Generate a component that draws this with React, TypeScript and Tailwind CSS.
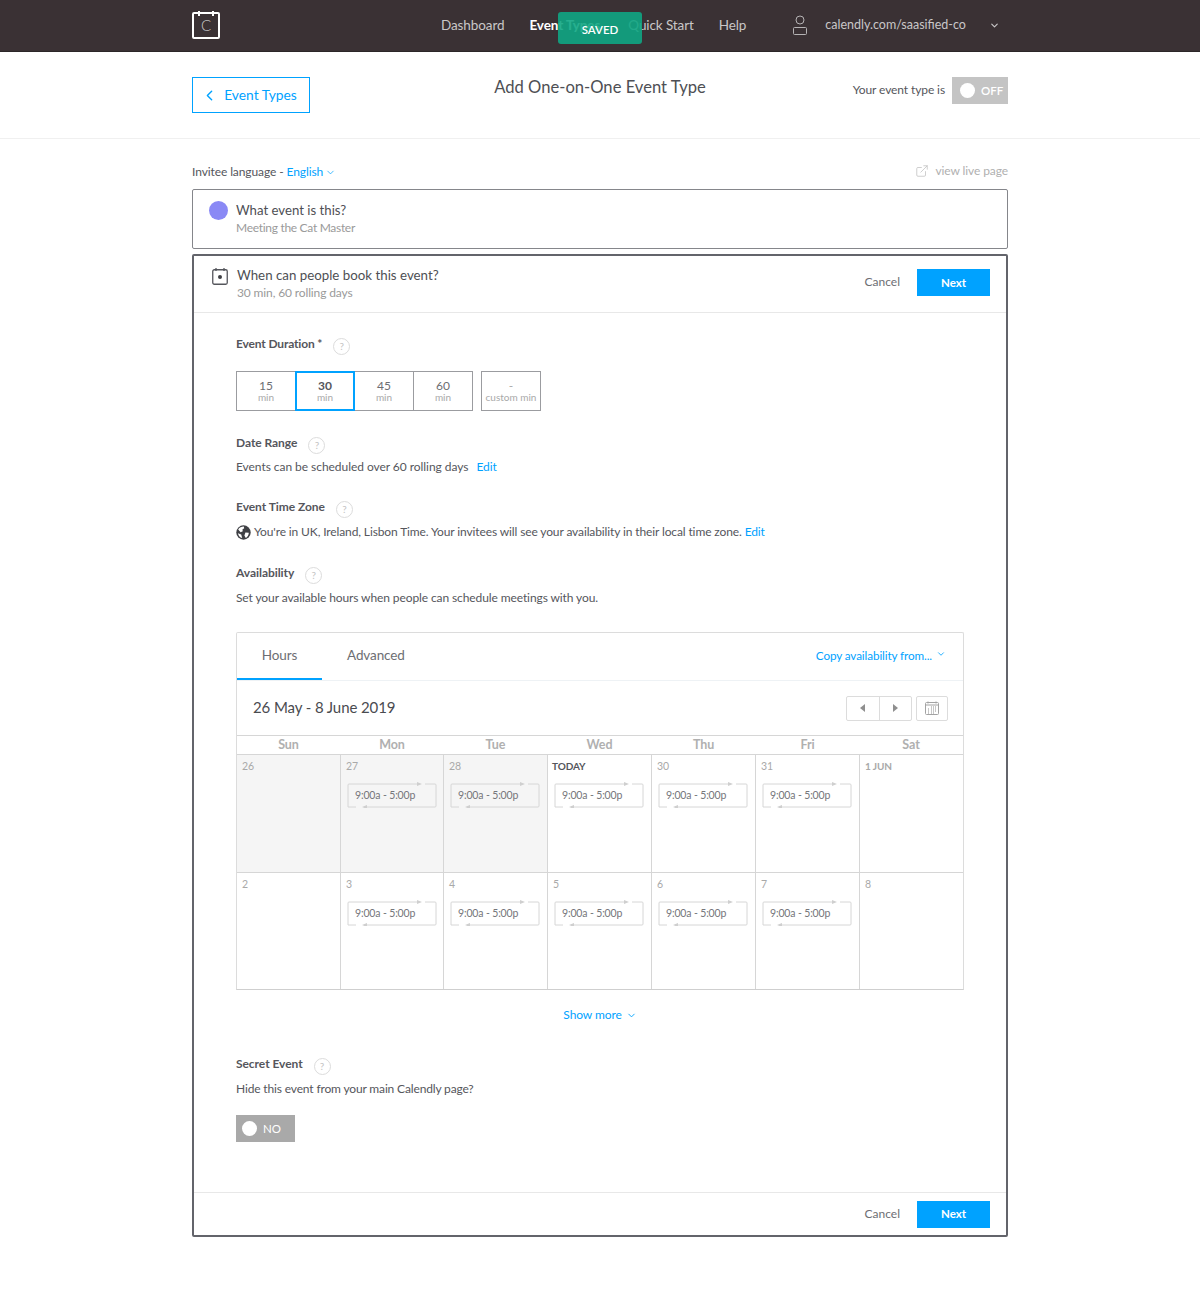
import { ChevronDown, ChevronLeft, ExternalLink } from 'lucide-react';

const days = ['Sun', 'Mon', 'Tue', 'Wed', 'Thu', 'Fri', 'Sat'];

const weeks = [
  [
    { label: '26', past: true, slot: false },
    { label: '27', past: true, slot: true },
    { label: '28', past: true, slot: true },
    { label: 'TODAY', today: true, slot: true },
    { label: '30', slot: true },
    { label: '31', slot: true },
    { label: '1 JUN', month: true, slot: false },
  ],
  [
    { label: '2', slot: false },
    { label: '3', slot: true },
    { label: '4', slot: true },
    { label: '5', slot: true },
    { label: '6', slot: true },
    { label: '7', slot: true },
    { label: '8', slot: false },
  ],
];

function HelpDot() {
  return (
    <span className="ml-[11px] mt-[4px] flex h-[17px] w-[17px] items-center justify-center rounded-full border border-[#dcdcdc] text-[10px] font-normal text-[#c4c4c4]">
      ?
    </span>
  );
}

function SectionLabel({ children }: { children: React.ReactNode }) {
  return (
    <div className="flex h-[18px] items-center text-[12px] font-bold tracking-[-0.05px] text-[#55565c]">
      {children}
      <HelpDot />
    </div>
  );
}

function Duration({ value, active, first }: { value: string; active?: boolean; first?: boolean }) {
  if (active) {
    return (
      <div className="relative z-10 -ml-px flex h-10 w-[60px] flex-col items-center justify-center border-2 border-[#00a2ff] leading-none">
        <span className="text-[12px] font-bold text-[#55565c]">{value}</span>
        <span className="text-[10px] text-[#a9a9a9]">min</span>
      </div>
    );
  }
  return (
    <div
      className={`flex h-10 flex-col items-center justify-center border-y border-r border-[#9b9ca0] leading-none ${
        first ? 'w-[60px] border-l' : 'w-[59px]'
      }`}
    >
      <span className="text-[12px] text-[#6d6e73]">{value}</span>
      <span className="text-[10px] text-[#a9a9a9]">min</span>
    </div>
  );
}

function TimeSlot() {
  return (
    <div className="relative mx-[6px] mt-[9px] h-[26px] w-[90px] pl-[8px] pt-[6px] text-[10.5px] leading-[15px] tracking-[-0.15px] text-[#75767a]">
      <svg className="absolute left-0 top-0" width="90" height="26" viewBox="0 0 90 26" fill="none">
        <path d="M 1 25 L 1 3 Q 1 2 2 2 L 70 2 M 78 2 L 88 2 Q 89 2 89 3 L 89 24 Q 89 25 88 25 L 17 25 M 9 25 L 1 25" stroke="#d6d6d6" />
        <path d="M 70 0 L 75 2 L 70 4 Z" fill="#cfcfcf" />
        <path d="M 20 23 L 15 25 L 20 27 Z" fill="#cfcfcf" />
      </svg>
      <span className="relative">9:00a - 5:00p</span>
    </div>
  );
}

function PrimaryActions() {
  return (
    <div className="flex items-center">
      <span className="mb-px text-[12px] text-[#6d6e73]">Cancel</span>
      <span className="ml-[17px] flex h-[27px] w-[73px] items-center justify-center bg-[#00a2ff] text-[11.5px] font-bold text-white">
        Next
      </span>
    </div>
  );
}

function Calendar() {
  return (
    <div className="mt-[26px] rounded-t-[2px] border border-[#dcdcdc] border-b-[#cfcfcf] text-[#55565c]">
      <div className="flex h-[48px] items-stretch justify-between border-b border-[#eef2f5]">
        <div className="flex">
          <div className="flex w-[85px] items-center justify-center border-b-2 border-[#00a2ff] text-[13.5px] text-[#6d6e73]">Hours</div>
          <div className="ml-[25px] flex items-center pb-[2px] text-[13.5px] text-[#6d6e73]">Advanced</div>
        </div>
        <div className="mr-[17px] flex items-center pb-[2px] text-[11.7px] text-[#00a2ff]">
          Copy availability from...
          <ChevronDown className="mb-[3px] ml-[4px] h-[10px] w-[10px]" strokeWidth={2} />
        </div>
      </div>

      <div className="flex h-[55px] items-center justify-between border-b border-[#d6d6d6] pl-[16px] pr-[15px]">
        <span className="mb-[2px] text-[15px] text-[#4a4b50]">26 May - 8 June 2019</span>
        <div className="flex items-center">
          <div className="flex h-[25px] w-[66px] rounded-[2px] border border-[#dcdcdc]">
            <div className="flex flex-1 items-center justify-center border-r border-[#dcdcdc]">
              <svg width="6" height="8" viewBox="0 0 6 8"><path d="M 5 0 L 0 4 L 5 8 Z" fill="#8f8f8f" /></svg>
            </div>
            <div className="flex flex-1 items-center justify-center">
              <svg width="6" height="8" viewBox="0 0 6 8"><path d="M 1 0 L 6 4 L 1 8 Z" fill="#8f8f8f" /></svg>
            </div>
          </div>
          <div className="ml-[4px] flex h-[25px] w-[32px] items-center justify-center rounded-[2px] border border-[#dcdcdc]">
            <svg width="14" height="14" viewBox="0 0 14 14" fill="none">
              <rect x="0.5" y="1.5" width="13" height="12" rx="1" stroke="#a3a3a3" />
              <path d="M 1 4 L 13 4" stroke="#a3a3a3" />
              <path d="M 3 0.5 V 2.5 M 11 0.5 V 2.5" stroke="#a3a3a3" />
              <path d="M 6 6 H 7 M 8 6 H 9 M 10 6 H 11 M 3 8 H 4 M 6 8 H 7 M 8 8 H 9 M 10 8 H 11 M 3 10 H 4 M 6 10 H 7 M 8 10 H 9 M 10 10 H 11 M 3 12 H 4 M 6 12 H 7 M 8 12 H 9" stroke="#8f8f8f" />
            </svg>
          </div>
        </div>
      </div>

      <div className="grid h-[19px] grid-cols-[104px_103px_104px_104px_104px_104px_103px] border-b border-[#d6d6d6]">
        {days.map((d) => (
          <div key={d} className="flex items-center justify-center pr-px text-[12.5px] font-bold text-[#b0b0b0]">
            {d}
          </div>
        ))}
      </div>

      {weeks.map((week, i) => (
        <div
          key={i}
          className={
            i === 0
              ? 'grid h-[118px] grid-cols-[104px_103px_104px_104px_104px_104px_103px] border-b border-[#d6d6d6]'
              : 'grid h-[116px] grid-cols-[104px_103px_104px_104px_104px_104px_103px]'
          }
        >
          {week.map((cell) => (
            <div
              key={cell.label}
              className={`border-r border-[#d6d6d6] last:border-r-0 ${cell.past ? 'bg-[#f5f5f5]' : 'bg-white'}`}
            >
              <div
                className={
                  cell.today
                    ? 'pl-[4px] pt-[5px] text-[10px] font-bold leading-[13px] text-[#55565c]'
                    : cell.month
                      ? 'pl-[5px] pt-[5px] text-[10px] font-bold leading-[13px] text-[#a9a9a9]'
                      : 'pl-[5px] pt-[5px] text-[10.5px] leading-[13px] text-[#a9a9a9]'
                }
              >
                {cell.label}
              </div>
              {cell.slot && <TimeSlot />}
            </div>
          ))}
        </div>
      ))}
    </div>
  );
}

export default function App() {
  return (
    <div className="relative min-h-[1295px] bg-white font-['Lato',sans-serif] text-[#55565c]">
      {/* top nav */}
      <header className="flex h-[52px] items-center border-b border-[#2c2628] bg-[#3a3134] pl-[192px]">
        <div className="relative flex h-[27px] w-[28px] items-center justify-center rounded-[2px] border-2 border-white">
          <span className="absolute -top-[3px] left-[4px] h-[5px] w-[2px] bg-white" />
          <span className="absolute -top-[3px] right-[4px] h-[5px] w-[2px] bg-white" />
          <span className="text-[15px] font-light leading-none text-[#c8c8c8]">C</span>
        </div>
        <nav className="mb-px ml-[221px] flex items-center text-[13.5px] tracking-[-0.1px] text-[#c9c7c8]">
          <span>Dashboard</span>
          <span className="ml-[25px] font-bold text-white">Event Types</span>
          <span className="ml-[28px]">Quick Start</span>
          <span className="ml-[25px]">Help</span>
        </nav>
        <svg className="ml-[46px]" width="16" height="21" viewBox="0 0 16 21" fill="none">
          <circle cx="8" cy="5" r="4" stroke="#b5b3b4" />
          <rect x="1.5" y="12.5" width="13" height="7" rx="1" stroke="#b5b3b4" />
        </svg>
        <span className="ml-[17px] text-[12.5px] text-[#c9c7c8]">calendly.com/saasified-co</span>
        <ChevronDown className="ml-[23px] h-[11px] w-[11px] text-[#c9c7c8]" strokeWidth={2.5} />
      </header>

      {/* saved toast */}
      <div className="absolute left-[558px] top-[12px] flex h-[32px] w-[84px] items-center justify-center rounded-[3px] bg-[#10a683]/90 pt-[3px] text-[11.5px] font-semibold text-white">
        SAVED
      </div>

      {/* page title row */}
      <div className="flex h-[87px] items-start border-b border-[#f0f0f0] px-[192px] pt-[25px]">
        <div className="flex-1">
          <div className="flex h-[36px] w-[118px] items-center justify-center border border-[#00a2ff] pr-[2px] text-[13.8px] text-[#00a2ff]">
            <ChevronLeft className="-ml-[2px] mr-[6px] h-[17px] w-[17px]" strokeWidth={2} />
            Event Types
          </div>
        </div>
        <h1 className="-mt-px text-[16.6px] leading-[22px] text-[#4e4f54]">Add One-on-One Event Type</h1>
        <div className="flex flex-1 items-center justify-end">
          <span className="mb-[2px] text-[12px] tracking-[-0.1px] text-[#55565c]">Your event type is</span>
          <div className="ml-[7px] flex h-[27px] w-[56px] items-center bg-[#c4c4c4] pl-[8px] text-[11.5px] font-semibold text-white">
            <span className="h-[15px] w-[15px] rounded-full bg-white" />
            <span className="ml-[6px]">OFF</span>
          </div>
        </div>
      </div>

      <main className="mx-auto w-[816px]">
        <div className="flex h-[50px] items-end justify-between pb-[8px] text-[12px] tracking-[-0.1px]">
          <span className="flex items-center">
            Invitee language -
            <span className="ml-[3px] text-[#00a2ff]">English</span>
            <ChevronDown className="ml-[2px] h-[11px] w-[11px] text-[#00a2ff]" strokeWidth={1.6} />
          </span>
          <span className="mb-px flex items-center text-[#b0b0b0]">
            <ExternalLink className="mr-[6px] h-[14px] w-[14px] text-[#c0c0c0]" strokeWidth={1.3} />
            view live page
          </span>
        </div>

        <section className="flex h-[60px] rounded-[2px] border border-[#85868b] pl-[16px] pt-[11px]">
          <span className="h-[19px] w-[19px] rounded-full bg-[#8a89f5]" />
          <div className="ml-[8px]">
            <div className="text-[13.2px] leading-[18px] text-[#4e4f54]">What event is this?</div>
            <div className="mt-[1px] text-[12px] leading-[16px] tracking-[-0.3px] text-[#9a9a9a]">Meeting the Cat Master</div>
          </div>
        </section>

        <section className="mt-[5px] rounded-[2px] border-2 border-[#63646b]">
          <div className="flex h-[57px] items-center justify-between border-b border-[#e8e8e8] pb-[3px] pl-[18px] pr-[16px]">
            <div className="flex h-full pt-[10px]">
              <svg className="mt-[2px]" width="16" height="17" viewBox="0 0 16 17" fill="none">
                <rect x="0.75" y="1.75" width="14.5" height="14.5" rx="1.5" stroke="#55565c" strokeWidth="1.3" />
                <path d="M 4 0 V 3 M 12 0 V 3" stroke="#55565c" strokeWidth="1.3" />
                <circle cx="8" cy="9" r="2" fill="#3e3f44" />
              </svg>
              <div className="ml-[9px]">
                <div className="text-[13.3px] leading-[18px] text-[#4e4f54]">When can people book this event?</div>
                <div className="mt-[1px] text-[12px] leading-[16px] tracking-[-0.13px] text-[#9a9a9a]">30 min, 60 rolling days</div>
              </div>
            </div>
            <PrimaryActions />
          </div>

          <div className="h-[880px] border-b border-[#e8e8e8] px-[42px] pt-[22px] text-[12px] tracking-[-0.1px]">
            <SectionLabel>
              <span className="tracking-[-0.15px]">Event Duration *</span>
            </SectionLabel>

            <div className="mt-[18px] flex tracking-normal">
              <Duration value="15" first />
              <Duration value="30" active />
              <Duration value="45" />
              <Duration value="60" />
              <div className="ml-[8px] flex h-10 w-[60px] flex-col items-center justify-center border border-[#9b9ca0] leading-none">
                <span className="text-[12px] text-[#a9a9a9]">-</span>
                <span className="text-[10px] text-[#a9a9a9]">custom min</span>
              </div>
            </div>

            <div className="mt-[23px]">
              <SectionLabel>Date Range</SectionLabel>
            </div>
            <p className="mt-[7px] leading-[16px] tracking-[-0.05px]">
              Events can be scheduled over 60 rolling days
              <span className="ml-[8px] text-[#00a2ff]">Edit</span>
            </p>

            <div className="mt-[23px]">
              <SectionLabel>Event Time Zone</SectionLabel>
            </div>
            <p className="mt-[8px] flex items-center leading-[16px] tracking-[-0.12px]">
              <svg className="mr-[3px]" width="15" height="15" viewBox="0 0 15 15">
                <circle cx="7.5" cy="7.5" r="7.2" fill="#3f4045" />
                <path d="M 2.2 4.5 C 3.5 2.5 5.5 1.6 7.8 1.6 L 8.2 3.2 L 6.4 4.6 L 6.8 6.2 L 4.6 7.2 Z M 9.4 7.6 L 12.8 7.8 C 12.8 10 11.6 12 9.8 12.9 L 8.4 10.4 Z M 2 8.2 L 5.2 9.4 L 6.2 13 C 4 12.6 2.4 10.6 2 8.2 Z" fill="#ffffff" />
              </svg>
              You're in UK, Ireland, Lisbon Time. Your invitees will see your availability in their local time zone.
              <span className="ml-[3px] text-[#00a2ff]">Edit</span>
            </p>

            <div className="mt-[24px]">
              <SectionLabel>Availability</SectionLabel>
            </div>
            <p className="mt-[8px] leading-[16px]">Set your available hours when people can schedule meetings with you.</p>

            <Calendar />

            <div className="mt-[17px] flex items-center justify-center leading-[16px] text-[#00a2ff]">
              Show more
              <ChevronDown className="ml-[4px] h-[11px] w-[11px]" strokeWidth={2} />
            </div>

            <div className="mt-[32px]">
              <SectionLabel>Secret Event</SectionLabel>
            </div>
            <p className="mt-[8px] leading-[16px] tracking-[-0.15px]">Hide this event from your main Calendly page?</p>
            <div className="mt-[18px] flex h-[27px] w-[59px] items-center bg-[#a9a9a9] pl-[6px] text-[11.5px] text-white">
              <span className="h-[15px] w-[15px] rounded-full bg-white" />
              <span className="ml-[6px]">NO</span>
            </div>
          </div>

          <div className="flex h-[42px] items-center justify-end pr-[16px]">
            <PrimaryActions />
          </div>
        </section>
      </main>
    </div>
  );
}
